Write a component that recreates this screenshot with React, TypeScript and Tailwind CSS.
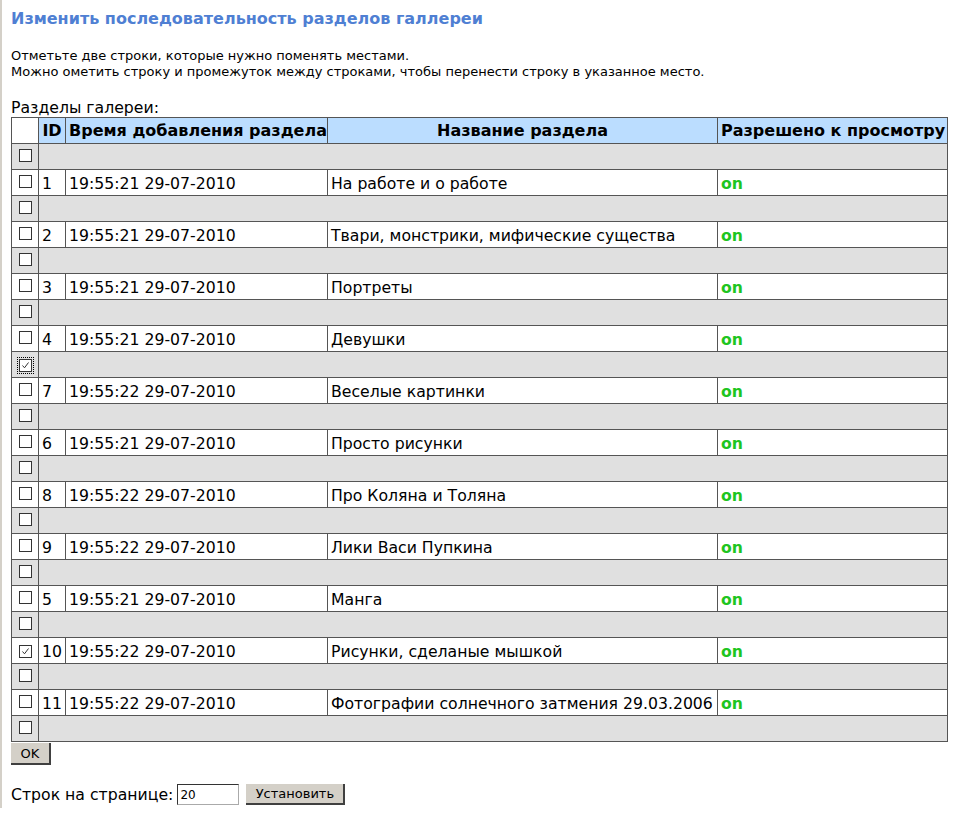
import { Fragment } from 'react';

type Section = {
  id: number;
  time: string;
  name: string;
  checked?: boolean;
};

const sections: Section[] = [
  { id: 1, time: '19:55:21 29-07-2010', name: 'На работе и о работе' },
  { id: 2, time: '19:55:21 29-07-2010', name: 'Твари, монстрики, мифические существа' },
  { id: 3, time: '19:55:21 29-07-2010', name: 'Портреты' },
  { id: 4, time: '19:55:21 29-07-2010', name: 'Девушки' },
  { id: 7, time: '19:55:22 29-07-2010', name: 'Веселые картинки' },
  { id: 6, time: '19:55:21 29-07-2010', name: 'Просто рисунки' },
  { id: 8, time: '19:55:22 29-07-2010', name: 'Про Коляна и Толяна' },
  { id: 9, time: '19:55:22 29-07-2010', name: 'Лики Васи Пупкина' },
  { id: 5, time: '19:55:21 29-07-2010', name: 'Манга' },
  { id: 10, time: '19:55:22 29-07-2010', name: 'Рисунки, сделаные мышкой', checked: true },
  { id: 11, time: '19:55:22 29-07-2010', name: 'Фотографии солнечного затмения 29.03.2006' },
];

// gap between rows that is ticked (before row with id 7)
const CHECKED_GAP = 4;

function Checkbox({ checked, focused }: { checked?: boolean; focused?: boolean }) {
  return (
    <span
      className={`inline-flex items-center justify-center p-[1px] ${
        focused ? 'outline-1 outline-dotted outline-black' : ''
      }`}
    >
      <span className="flex items-center justify-center w-[13px] h-[13px] border border-[#333] bg-white">
        {checked && (
          <svg width="9" height="9" viewBox="0 0 9 9">
            <path d="M1.5 4.5 L3.5 6.8 L7.5 1.5" fill="none" stroke="#333" strokeWidth="1" />
          </svg>
        )}
      </span>
    </span>
  );
}

function GapRow({ index }: { index: number }) {
  const isChecked = index === CHECKED_GAP;
  return (
    <tr className="h-[26px] bg-[#e0e0e0]">
      <td className="border border-[#555] text-center align-middle p-0 leading-none">
        <Checkbox checked={isChecked} focused={isChecked} />
      </td>
      <td colSpan={4} className="border border-[#555]" />
    </tr>
  );
}

export default function App() {
  const cell = 'border border-[#555] px-[3px] pt-[2px] pb-0 align-middle whitespace-nowrap';
  const head = 'border border-[#555] px-[3px] py-0 align-middle whitespace-nowrap bg-[#bbddff] font-bold text-center text-[16px]';

  return (
    <div
      className="h-[808px] border-l-2 border-[#d4d0c8] pl-[9px] text-black bg-white"
      style={{ fontFamily: '"DejaVu Sans", Verdana, sans-serif' }}
    >
      <h1 className="pt-[9px] text-[16px] leading-[19px] font-bold text-[#4f7fd3]">
        Изменить последовательность разделов галлереи
      </h1>

      <div className="mt-[20px] text-[13px] leading-[16px]">
        <p>Отметьте две строки, которые нужно поменять местами.</p>
        <p>Можно ометить строку и промежуток между строками, чтобы перенести строку в указанное место.</p>
      </div>

      <p className="mt-[18px] text-[15.7px] leading-[19px]">Разделы галереи:</p>

      <table className="table-fixed border-collapse w-[936px] text-[15.7px] leading-[19px]">
        <colgroup>
          <col className="w-[27px]" />
          <col className="w-[27px]" />
          <col className="w-[262px]" />
          <col className="w-[390px]" />
          <col className="w-[230px]" />
        </colgroup>
        <thead>
          <tr className="h-[26px]">
            <th className="border border-[#555] bg-white" />
            <th className={head}>ID</th>
            <th className={head}>Время добавления раздела</th>
            <th className={head}>Название раздела</th>
            <th className={head}>Разрешено к просмотру</th>
          </tr>
        </thead>
        <tbody>
          {sections.map((s, i) => (
            <Fragment key={s.id}>
              <GapRow index={i} />
              <tr className="h-[26px] bg-white">
                <td className="border border-[#555] text-center align-middle p-0 leading-none">
                  <Checkbox checked={s.checked} />
                </td>
                <td className={cell}>{s.id}</td>
                <td className={cell}>{s.time}</td>
                <td className={cell}>{s.name}</td>
                <td className={`${cell} font-bold text-[#1fc51f]`}>on</td>
              </tr>
            </Fragment>
          ))}
          <GapRow index={sections.length} />
        </tbody>
      </table>

      <button className="block mt-px w-[40px] h-[22px] bg-[#d4d0c8] border-r-2 border-b-2 border-[#404040] text-[13px] leading-none text-black">
        OK
      </button>

      <div className="mt-[19px] flex items-center text-[15.7px] leading-[19px]">
        <span>Строк на странице:</span>
        <input
          defaultValue="20"
          className="ml-[4px] w-[62px] h-[21px] border border-[#aaa] border-t-[#333] border-l-[#333] px-[2px] text-[12px] bg-white outline-none"
        />
        <button className="ml-[7px] w-[99px] h-[21px] bg-[#d4d0c8] border-r-2 border-b-2 border-[#404040] text-[13px] leading-none">
          Установить
        </button>
      </div>
    </div>
  );
}
